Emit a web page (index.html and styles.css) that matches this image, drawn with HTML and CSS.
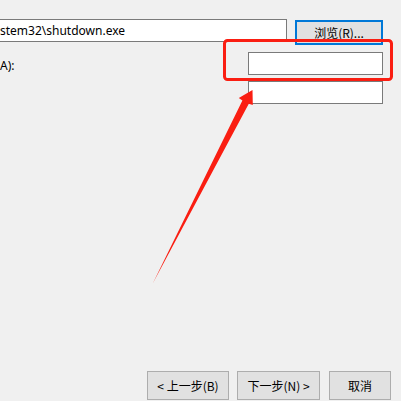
FILE: index.html
```html
<!DOCTYPE html>
<html lang="zh-CN">
<head>
<meta charset="utf-8">
<link rel="stylesheet" href="styles.css">
<title>任务向导</title>
</head>
<body>
<div class="dialog">
  <div class="row-program">
    <div class="field field-path">stem32\shutdown.exe</div>
    <button class="btn btn-browse">浏览(R)...</button>
  </div>
  <div class="row-args">
    <div class="label">A):</div>
    <div class="fields">
      <div class="field field-small"></div>
      <div class="field field-small"></div>
    </div>
  </div>
  <div class="footer">
    <button class="btn btn-nav">&lt; 上一步(B)</button>
    <button class="btn btn-nav btn-next">下一步(N) &gt;</button>
    <button class="btn btn-cancel">取消</button>
  </div>
</div>
<svg class="annotation" width="401" height="401" viewBox="0 0 401 401">
  <rect x="224.5" y="40.5" width="167" height="39" rx="3" ry="3" fill="none" stroke="#fa1e12" stroke-width="3"/>
  <polygon points="252.5,90 252.8,105 248.8,103.8 153,283 242.4,100.5 238.8,98" fill="#fa1e12"/>
</svg>
</body>
</html>
```
FILE: styles.css
```css
html, body {
  margin: 0;
  padding: 0;
  width: 401px;
  height: 401px;
  overflow: hidden;
  background: #f0f0f0;
  font-family: "Noto Sans", "Noto Sans CJK SC", sans-serif;
  font-size: 12px;
  color: #000;
}

.dialog {
  position: relative;
  height: 401px;
  box-sizing: border-box;
  padding-top: 19px;
  padding-bottom: 1px;
  display: flex;
  flex-direction: column;
}

.row-program {
  display: flex;
  align-items: flex-start;
  gap: 8px;
}

.field {
  box-sizing: border-box;
  background: #fff;
  border: 1px solid #7a7a7a;
}

.field-path {
  margin-left: -10px;
  width: 297px;
  height: 23px;
  padding-left: 9px;
  line-height: 21px;
  white-space: nowrap;
  overflow: hidden;
  font-family: "Noto Sans", sans-serif;
  font-size: 12px;
}

.btn {
  box-sizing: border-box;
  margin: 0;
  padding: 0;
  background: #e1e1e1;
  border: 1px solid #adadad;
  font-family: "Noto Sans CJK SC", "Noto Sans", sans-serif;
  font-size: 12px;
  color: #000;
}

.btn-browse {
  margin-top: 1px;
  width: 88px;
  height: 25px;
  border: 2px solid #0078d7;
}

.row-args {
  display: flex;
  justify-content: space-between;
  margin-top: 7px;
  padding-right: 18px;
}

.label {
  padding-top: 6px;
  line-height: 16px;
}

.fields {
  display: flex;
  flex-direction: column;
  gap: 6px;
}

.field-small {
  width: 135px;
  height: 23px;
}

.footer {
  margin-top: auto;
  display: flex;
  justify-content: flex-end;
  gap: 8px;
  padding-right: 10px;
}

.btn-nav {
  width: 82px;
  height: 29px;
}

.btn-next {
  width: 83px;
  margin-right: 1px;
}

.btn-cancel {
  width: 62px;
  height: 29px;
}

.annotation {
  position: absolute;
  left: 0;
  top: 0;
  pointer-events: none;
}
```
